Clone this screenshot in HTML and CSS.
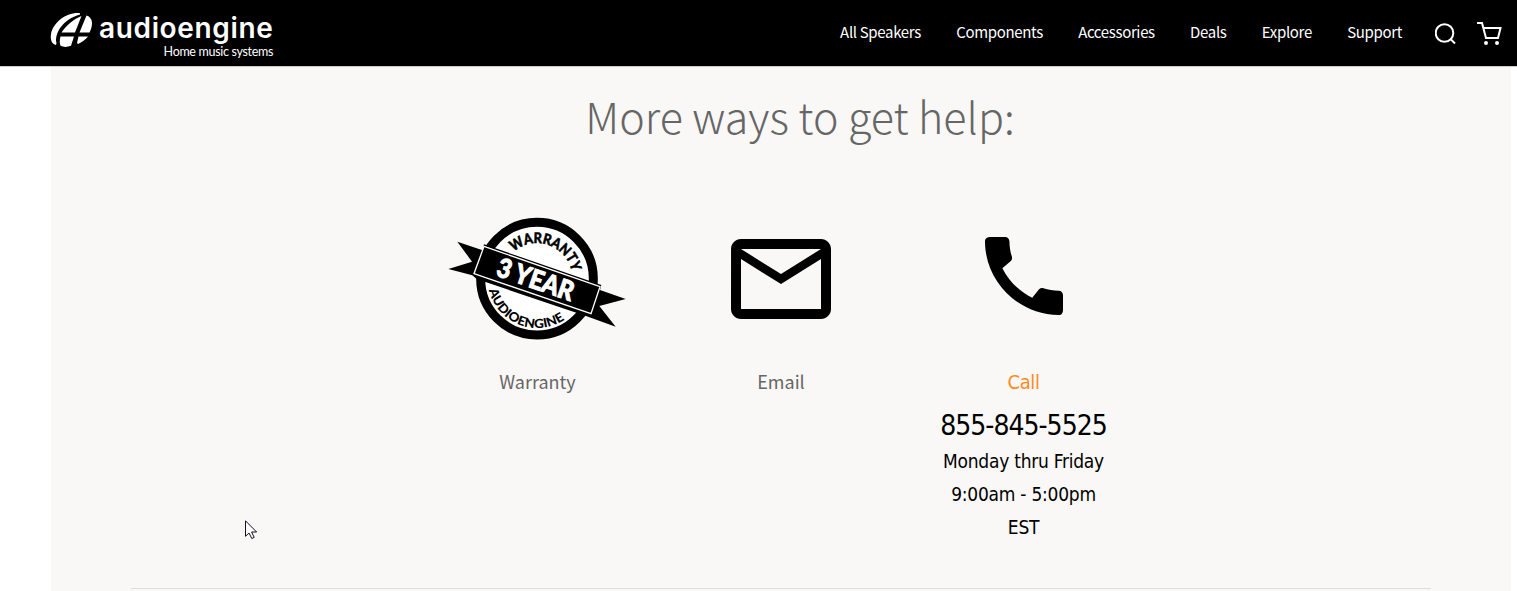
FILE: index.html
```html
<!DOCTYPE html>
<html lang="en">
<head>
    <meta charset="UTF-8">
    <meta name="viewport" content="width=device-width, initial-scale=1.0">
    <title>Audioengine Support</title>
    <link rel="stylesheet" href="styles.css">
</head>
<body>
    <header class="header">
        <a class="logo" href="#">
            <svg width="43" height="36" viewBox="0 0 43 36" fill="#fff">
                <path d="M30 1.200C16 0 3 11 1 22c-1 6 1 10 5 11l.5-2C4 22 13 7 30 2.500z"/>
                <path d="M31.500 4C23 7.500 16 13.500 11.500 20.500H25z"/>
                <path d="M36.500 3.500C40 4.500 42 7.500 42 11.500c0 3-1 6-2.500 9H29.500z"/>
                <path d="M10.500 24.500h13.500l-3 9.300c-4 1.500-7.500 1.500-10.500 0-1-2.500-1-6 0-9.300z"/>
                <path d="M28.500 24.500h9.500c-2.500 3-6 5.500-10 7.500l-1-1z"/>
            </svg>
            <div class="logo-text">
                <div class="logo-name">audioengine</div>
                <div class="logo-tag">Home music systems</div>
            </div>
        </a>
        <nav class="nav">
            <a href="#">All Speakers</a>
            <a href="#">Components</a>
            <a href="#">Accessories</a>
            <a href="#">Deals</a>
            <a href="#">Explore</a>
            <a href="#">Support</a>
        </nav>
        <div class="tools">
            <svg width="22" height="22" viewBox="0 0 22 22" fill="none" stroke="#fff" stroke-width="2">
                <circle cx="9.500" cy="10" r="8.800"/>
                <path d="M15.500 16l4.500 4.500"/>
            </svg>
            <svg width="25" height="24" viewBox="0 0 25 24" fill="none" stroke="#fff" stroke-width="2">
                <path d="M0 1h5l4 15h12l2.500-10H6"/>
                <circle cx="9" cy="21" r="2" fill="#fff" stroke="none"/>
                <circle cx="20" cy="21" r="2" fill="#fff" stroke="none"/>
            </svg>
        </div>
    </header>

    <main class="help">
        <h1>More ways to get help:</h1>
        <div class="ways">
            <div class="way">
                <div class="icon badge">
                    <svg width="195" height="135" viewBox="0 0 585 405">
                        <circle cx="291" cy="206" r="169" fill="#fff" stroke="#000" stroke-width="27"/>
                        <!-- ribbon -->
                        <path d="M52 95L128 121 132 103 484 225 480 240 557 267 478 288 527 350 440 319 110 207 97 196 25 177 96 155z"/>
                        <path d="M132 109L480 230 453 311 102 191z" stroke="#fff" stroke-width="4"/>
                        <path id="top" d="M221 126A106 106 0 0 1 397 206" fill="none"/>
                        <path id="bottom" d="M147 240A148 148 0 0 0 390 316" fill="none"/>
                        <text class="badge-top"><textPath href="#top" textLength="222" lengthAdjust="spacingAndGlyphs">WARRANTY</textPath></text>
                        <text class="badge-bottom"><textPath href="#bottom" textLength="286" lengthAdjust="spacingAndGlyphs">AUDIOENGINE</textPath></text>
                        <text class="badge-year" transform="translate(165 196) rotate(19)" textLength="239" lengthAdjust="spacingAndGlyphs">3 YEAR</text>
                    </svg>
                </div>
                <a class="label" href="#">Warranty</a>
            </div>
            <div class="way">
                <div class="icon">
                    <svg width="120" height="120" viewBox="0 0 24 24">
                        <path d="M20 4H4c-1.100 0-1.990.9-1.990 2L2 18c0 1.100.9 2 2 2h16c1.100 0 2-.9 2-2V6c0-1.100-.9-2-2-2zm0 14H4V8l8 5 8-5v10zm-8-7L4 6h16l-8 5z"/>
                    </svg>
                </div>
                <a class="label" href="#">Email</a>
            </div>
            <div class="way way-call">
                <div class="icon call-icon">
                    <svg width="104" height="104" viewBox="0 0 24 24">
                        <path d="M20.010 15.380c-1.230 0-2.420-.2-3.530-.56-.35-.12-.74-.03-1.010.24l-1.570 1.970c-2.830-1.350-5.480-3.900-6.890-6.830l1.950-1.660c.27-.28.35-.67.24-1.020-.37-1.110-.56-2.300-.56-3.530 0-.54-.45-.99-.99-.99H4.190C3.650 3 3 3.240 3 3.990 3 13.280 10.730 21 20.010 21c.71 0 .99-.63.99-1.180v-3.450c0-.54-.45-.99-.99-.99z"/>
                    </svg>
                </div>
                <a class="label call" href="#">Call</a>
                <p class="phone">855-845-5525</p>
                <p class="hours">Monday thru Friday<br>9:00am - 5:00pm<br>EST</p>
            </div>
        </div>
        <hr>
    </main>

    <svg class="cursor" width="13" height="20" viewBox="0 0 13 20">
        <path d="M.5.8v15.500l3.500-3.300 2.800 5.500 2.400-1.100-2.600-5.400h5z" fill="#fff" stroke="#112" stroke-width="1"/>
    </svg>
</body>
</html>
```

FILE: styles.css
```css
* {
    margin: 0;
    padding: 0;
    box-sizing: border-box;
}

body {
    height: 591px;
    overflow: hidden;
    background: #fff;
    font-family: "Noto Sans CJK SC", "Open Sans", sans-serif;
}

a {
    color: inherit;
    text-decoration: none;
}

svg {
    display: block;
}

.header {
    display: flex;
    height: 67px;
    padding: 12px 15px 0 50px;
    background: #000;
    border-bottom: 1px solid #ccc;
    color: #fff;
}

.logo {
    display: flex;
    gap: 6px;
    white-space: nowrap;
}

.logo-text {
    width: 174px;
}

.logo-name {
    font-family: Inter, sans-serif;
    font-size: 28px;
    font-weight: 600;
    line-height: 32px;
    letter-spacing: 0.65px;
}

.logo-tag {
    font-family: Lato, sans-serif;
    font-size: 12.5px;
    line-height: 16px;
    letter-spacing: -0.32px;
    text-align: right;
}

.nav {
    display: flex;
    gap: 35.3px;
    margin-left: auto;
    font-size: 15px;
    line-height: 40px;
    letter-spacing: -0.34px;
}

.tools {
    display: flex;
    gap: 20px;
    margin-left: 33px;
    padding-top: 12px;
}

.tools svg {
    margin-top: -1px;
}

.tools svg + svg {
    margin-top: -2px;
}

.help {
    width: 1460px;
    height: 524px;
    margin-left: 51px;
    padding: 0 80px;
    background: #f9f8f6;
}

h1 {
    padding-left: 38px;
    font-size: 43px;
    font-weight: 300;
    line-height: 97px;
    text-align: center;
    color: #666;
}

.ways {
    display: grid;
    grid-template-columns: repeat(3, 243.5px);
    justify-content: center;
    height: 424px;
    padding-top: 46px;
}

.way {
    display: flex;
    flex-direction: column;
    align-items: center;
}

.way-call {
    padding-right: 2px;
}

.icon {
    display: flex;
    align-items: center;
    justify-content: center;
    height: 138px;
}

.badge {
    padding-bottom: 3px;
}

.call-icon {
    padding-bottom: 6px;
}

.label {
    margin-top: 13px;
    font-size: 18px;
    line-height: 40px;
    color: #666;
}

.call,
.phone,
.hours {
    font-family: "DejaVu Sans Condensed", "DejaVu Sans", sans-serif;
    font-stretch: condensed;
}

.call {
    margin-top: 14px;
    font-size: 20px;
    letter-spacing: -0.4px;
    color: #ff8a1f;
}

.phone {
    padding-top: 2px;
    font-size: 28px;
    line-height: 44px;
    letter-spacing: -1px;
}

.hours {
    margin-top: -3px;
    font-size: 19px;
    line-height: 33px;
    letter-spacing: -0.25px;
    text-align: center;
}

hr {
    border: 0;
    border-top: 1px solid #ddd;
}

.badge-top,
.badge-bottom,
.badge-year {
    font-family: Lato, sans-serif;
    font-weight: 900;
}

.badge-top {
    font-size: 44px;
    stroke: #000;
    stroke-width: 1.5;
}

.badge-bottom {
    font-size: 38px;
}

.badge-year {
    font-size: 80px;
    fill: #fff;
    stroke: #fff;
    stroke-width: 3;
}

/* mouse pointer over the page */
.cursor {
    position: absolute;
    left: 245px;
    top: 520px;
}
```
